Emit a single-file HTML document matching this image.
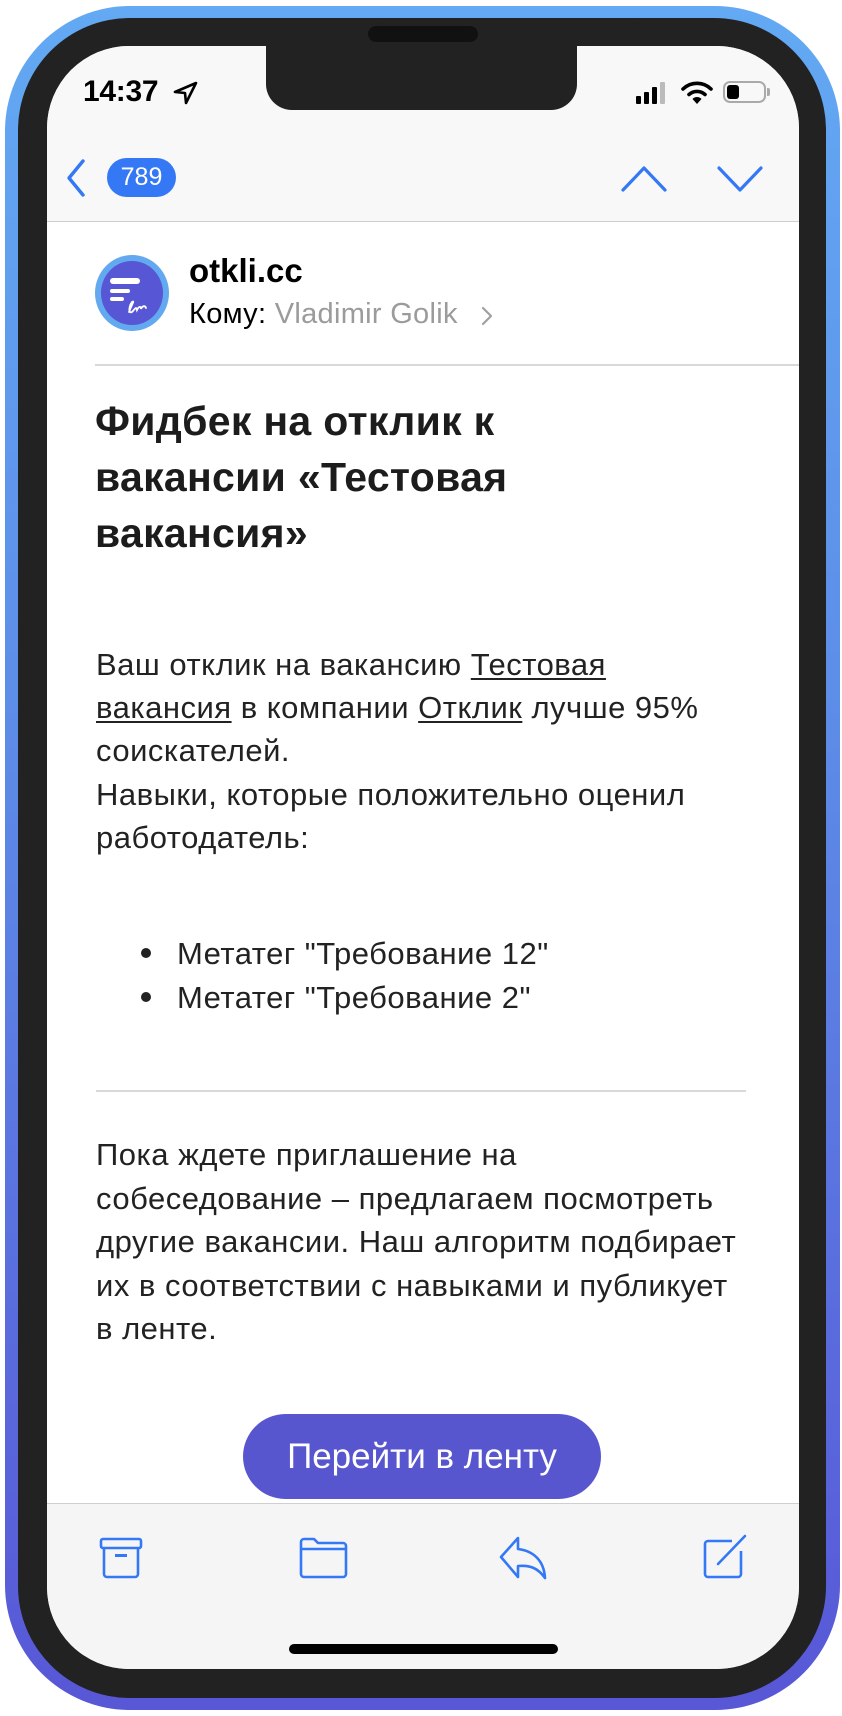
<!DOCTYPE html>
<html><head><meta charset="utf-8"><style>
*{margin:0;padding:0;box-sizing:border-box}
body{width:842px;height:1716px;background:#fff;position:relative;overflow:hidden;font-family:"Liberation Sans",Arial,sans-serif;color:#1c1c1c}
.abs{position:absolute}
.outer{left:5px;top:6px;width:835px;height:1704px;border-radius:125px;background:linear-gradient(#63a9f3 0%,#5d8ee8 40%,#5857d6 100%)}
.bezel{left:18px;top:18px;width:808px;height:1680px;border-radius:112px;background:#232222}
.screen{left:47px;top:46px;width:752px;height:1623px;border-radius:82px;background:#fff;overflow:hidden}
.t{position:absolute;white-space:nowrap}
u{text-decoration:underline;text-underline-offset:3px;text-decoration-thickness:1.5px}
</style></head><body>
<div class="abs outer"></div>
<div class="abs bezel"></div>
<div class="abs screen">
  <div class="abs" style="left:0;top:0;width:752px;height:176px;background:#f8f8f8;border-bottom:1.5px solid #cfcfcf"></div>
  <div class="abs" style="left:0;top:1457px;width:752px;height:166px;background:#f5f5f5;border-top:1.5px solid #cfcfcf"></div>
</div>
<div class="abs" style="left:266px;top:30px;width:311px;height:80px;background:#232222;border-radius:0 0 26px 26px"></div>
<div class="abs" style="left:368px;top:26px;width:110px;height:16px;background:#111;border-radius:8px"></div>
<div class="t" style="left:83px;top:75px;font-size:30px;font-weight:bold;color:#000;letter-spacing:-0.3px">14:37</div>
<svg class="abs" style="left:172px;top:81px" width="26" height="24" viewBox="0 0 26 24"><path d="M24 2 L3 11 L13 12 L14 22 Z" fill="none" stroke="#000" stroke-width="2.6" stroke-linejoin="round"/></svg>
<svg class="abs" style="left:636px;top:82px" width="34" height="22"><rect x="0" y="14" width="5" height="8" rx="1" fill="#000"/><rect x="8" y="10" width="5" height="12" rx="1" fill="#000"/><rect x="16" y="5" width="5" height="17" rx="1" fill="#000"/><rect x="24" y="0" width="5" height="22" rx="1" fill="#bbb"/></svg>
<svg class="abs" style="left:681px;top:80px" width="32" height="25" viewBox="0 0 32 25"><path d="M2 9 A20 20 0 0 1 30 9" fill="none" stroke="#000" stroke-width="3.6" stroke-linecap="round"/><path d="M8 14.5 A12 12 0 0 1 24 14.5" fill="none" stroke="#000" stroke-width="3.6" stroke-linecap="round"/><path d="M11.5 19 L16 24 L20.5 19 A6 6 0 0 0 11.5 19Z" fill="#000"/></svg>
<div class="abs" style="left:723px;top:81px;width:43px;height:22px;border:2px solid #aaa;border-radius:7px"></div>
<div class="abs" style="left:727px;top:85px;width:12px;height:14px;background:#000;border-radius:3px"></div>
<div class="abs" style="left:767px;top:88px;width:3px;height:8px;background:#aaa;border-radius:0 2px 2px 0"></div>
<svg class="abs" style="left:62px;top:158px" width="28" height="40"><path d="M21 3 L7 20 L21 37" fill="none" stroke="#3478f6" stroke-width="3.4" stroke-linecap="round" stroke-linejoin="round"/></svg>
<div class="abs" style="left:107px;top:158px;width:69px;height:39px;border-radius:20px;background:#3478f6;color:#fff;font-size:25px;text-align:center;line-height:39px">789</div>
<svg class="abs" style="left:620px;top:164px" width="48" height="30"><path d="M3 26 L24 4 L45 26" fill="none" stroke="#3478f6" stroke-width="3.2" stroke-linecap="round" stroke-linejoin="round"/></svg>
<svg class="abs" style="left:716px;top:164px" width="48" height="30"><path d="M3 4 L24 26 L45 4" fill="none" stroke="#3478f6" stroke-width="3.2" stroke-linecap="round" stroke-linejoin="round"/></svg>
<svg class="abs" style="left:94px;top:254px" width="76" height="78" viewBox="0 0 76 78"><ellipse cx="38" cy="39" rx="37" ry="38" fill="#62a9f0"/><ellipse cx="38" cy="39" rx="31" ry="32" fill="#5756d5"/><rect x="16" y="24" width="30" height="6" rx="3" fill="#fff"/><rect x="16" y="35" width="20" height="4" rx="2" fill="#fff"/><rect x="16" y="43" width="14" height="4" rx="2" fill="#fff"/><path d="M35 58 C38 50 41 46 38 48 C35 52 34 60 38 58 C41 55 42 52 43 56 C45 52 47 52 47 55 C48 52 51 51 52 54" fill="none" stroke="#fff" stroke-width="1.8" stroke-linecap="round"/></svg>
<div class="t" style="left:189px;top:252px;font-size:33px;font-weight:bold;color:#000">otkli.cc</div>
<div class="t" style="left:189px;top:298px;font-size:29px;color:#000;letter-spacing:0.3px">Кому: <span style="color:#9b9b9b">Vladimir Golik</span></div>
<svg class="abs" style="left:480px;top:305px" width="14" height="22"><path d="M3 3 L11 11 L3 19" fill="none" stroke="#a0a0a0" stroke-width="2.2" stroke-linecap="round" stroke-linejoin="round"/></svg>
<div class="abs" style="left:95px;top:364px;width:704px;height:1.5px;background:#d8d8d8"></div>
<div class="t" style="left:95px;top:393px;font-size:41px;font-weight:bold;line-height:56px;color:#1c1c1c;letter-spacing:0.3px">Фидбек на отклик к<br>вакансии «Тестовая<br>вакансия»</div>
<div class="t" style="left:96px;top:643px;font-size:31px;line-height:43.2px;color:#222;letter-spacing:0.5px">Ваш отклик на вакансию <u>Тестовая</u><br><u>вакансия</u> в компании <u>Отклик</u> лучше 95%<br>соискателей.<br>Навыки, которые положительно оценил<br>работодатель:</div>
<div class="abs" style="left:141px;top:948px;width:10px;height:10px;border-radius:50%;background:#222"></div>
<div class="abs" style="left:141px;top:992px;width:10px;height:10px;border-radius:50%;background:#222"></div>
<div class="t" style="left:177px;top:932px;font-size:31px;line-height:44px;color:#222;letter-spacing:0.5px">Метатег "Требование 12"<br>Метатег "Требование 2"</div>
<div class="abs" style="left:96px;top:1090px;width:650px;height:2px;background:#d9d9d9"></div>
<div class="t" style="left:96px;top:1133px;font-size:31px;line-height:43.5px;color:#222;letter-spacing:0.5px">Пока ждете приглашение на<br>собеседование – предлагаем посмотреть<br>другие вакансии. Наш алгоритм подбирает<br>их в соответствии с навыками и публикует<br>в ленте.</div>
<div class="abs" style="left:243px;top:1414px;width:358px;height:85px;border-radius:43px;background:#5856cf;color:#fff;font-size:35px;text-align:center;line-height:85px">Перейти в ленту</div>
<svg class="abs" style="left:98px;top:1536px" width="46" height="44" viewBox="0 0 46 44"><rect x="3" y="3" width="40" height="9" rx="2" fill="none" stroke="#3478f6" stroke-width="2.6"/><path d="M6 12 V38 a3 3 0 0 0 3 3 H37 a3 3 0 0 0 3 -3 V12" fill="none" stroke="#3478f6" stroke-width="2.6"/><rect x="17" y="18" width="12" height="3" fill="#3478f6"/></svg>
<svg class="abs" style="left:298px;top:1536px" width="52" height="44" viewBox="0 0 52 44"><path d="M3 38 V6 a3 3 0 0 1 3 -3 H16 l4 4 H45 a3 3 0 0 1 3 3 V38 a3 3 0 0 1 -3 3 H6 a3 3 0 0 1 -3 -3Z M3 13 H48" fill="none" stroke="#3478f6" stroke-width="2.6" stroke-linejoin="round"/></svg>
<svg class="abs" style="left:498px;top:1535px" width="52" height="46" viewBox="0 0 52 46"><path d="M20 3 L3 22 L20 42 V31 C32 30 40 33 47 43 C46 26 36 16 20 14 Z" fill="none" stroke="#3478f6" stroke-width="2.6" stroke-linejoin="round"/></svg>
<svg class="abs" style="left:702px;top:1532px" width="50" height="48" viewBox="0 0 50 48"><path d="M30 9 H6 a3 3 0 0 0 -3 3 V42 a3 3 0 0 0 3 3 H36 a3 3 0 0 0 3 -3 V19" fill="none" stroke="#3478f6" stroke-width="2.6"/><path d="M16 32 L43 4" stroke="#3478f6" stroke-width="2.6" stroke-linecap="round"/></svg>
<div class="abs" style="left:289px;top:1644px;width:269px;height:10px;border-radius:5px;background:#000"></div>
</body></html>
